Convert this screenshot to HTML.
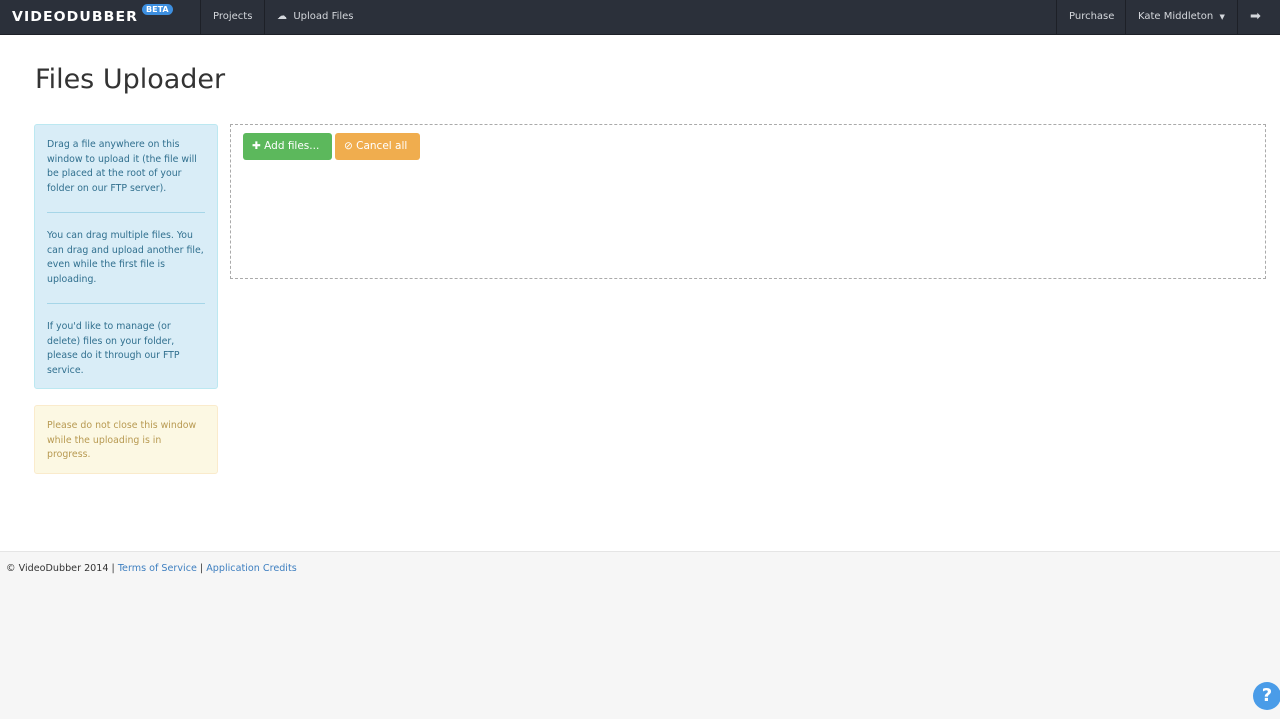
<!DOCTYPE html>
<html><head><style>
*{box-sizing:border-box;margin:0;padding:0}
body{width:1280px;height:719px;font-family:"DejaVu Sans",sans-serif;background:#fff;position:relative;overflow:hidden}
.nav{height:35px;background:#2b303a;position:relative;border-bottom:1px solid #1d2027}
.nav .it{position:absolute;top:0;height:34px;line-height:34px;color:#d4d7dc;font-size:10px;border-left:1px solid #1d2027;padding:0 12px}
.logo{position:absolute;left:12px;top:10px;color:#fff;font-weight:900;font-size:13px;letter-spacing:1px;font-family:"DejaVu Sans",sans-serif;transform:scaleX(1.08);transform-origin:left}
.beta{position:absolute;left:142px;top:4px;background:#3d8fe0;color:#fff;font-size:8px;border-radius:7px;padding:1px 4px;font-weight:bold}
h1{position:absolute;left:35px;top:64px;font-weight:normal;font-size:27px;color:#333}
.info{position:absolute;left:34px;top:124px;width:184px;height:265px;background:#d9edf7;border:1px solid #bce8f1;border-radius:3px;color:#31708f;font-size:9.4px;line-height:14.5px;padding:13px 12px}
.info p{padding-bottom:16px;border-bottom:1px solid #a6d6e8;margin-bottom:16px}
.info p:last-child{border:none}
.warn{position:absolute;left:34px;top:405px;width:184px;height:69px;background:#fcf8e3;border:1px solid #faebcc;border-radius:3px;color:#b89a52;font-size:9.4px;line-height:14.5px;padding:13px 12px}
.drop{position:absolute;left:230px;top:124px;width:1036px;height:155px;border:1px dashed #aaa}
.btn{position:absolute;top:8px;height:27px;line-height:27px;color:#fff;font-size:10.5px;border-radius:3px;padding:0 9px}
.foot{position:absolute;left:0;top:551px;width:1280px;height:168px;background:#f6f6f6;border-top:1px solid #e5e5e5;font-size:9.6px;color:#333;padding:11px 6px}
.foot a{color:#3e7fc0;text-decoration:none}
</style></head><body>
<div class="nav">
<div class="logo">VIDEODUBBER</div><div class="beta">BETA</div>
<div class="it" style="left:200px">Projects</div>
<div class="it" style="left:264px;padding-left:12px"><span style="font-size:10px">☁</span>&nbsp;&nbsp;Upload Files</div>
<div class="it" style="left:1056px">Purchase</div>
<div class="it" style="left:1125px">Kate Middleton &nbsp;<span style="font-size:7px">▼</span></div>
<div class="it" style="left:1237px;width:43px;font-size:13px">➡</div>
</div>
<h1>Files Uploader</h1>
<div class="info"><p>Drag a file anywhere on this window to upload it (the file will be placed at the root of your folder on our FTP server).</p><p>You can drag multiple files. You can drag and upload another file, even while the first file is uploading.</p><p>If you'd like to manage (or delete) files on your folder, please do it through our FTP service.</p></div>
<div class="warn">Please do not close this window while the uploading is in progress.</div>
<div class="drop">
<div class="btn" style="left:12px;width:89px;background:#5cb85c"><b>✚</b> Add files...</div>
<div class="btn" style="left:104px;width:85px;background:#f0ad4e">⊘ Cancel all</div>
</div>
<div class="foot">© VideoDubber 2014 | <a>Terms of Service</a> | <a>Application Credits</a></div>
<div style="position:absolute;left:1253px;top:682px;width:28px;height:28px;border-radius:50%;background:#4a9ce8;color:#fff;font-weight:bold;font-size:18px;text-align:center;line-height:28px">?</div>
</body></html>
